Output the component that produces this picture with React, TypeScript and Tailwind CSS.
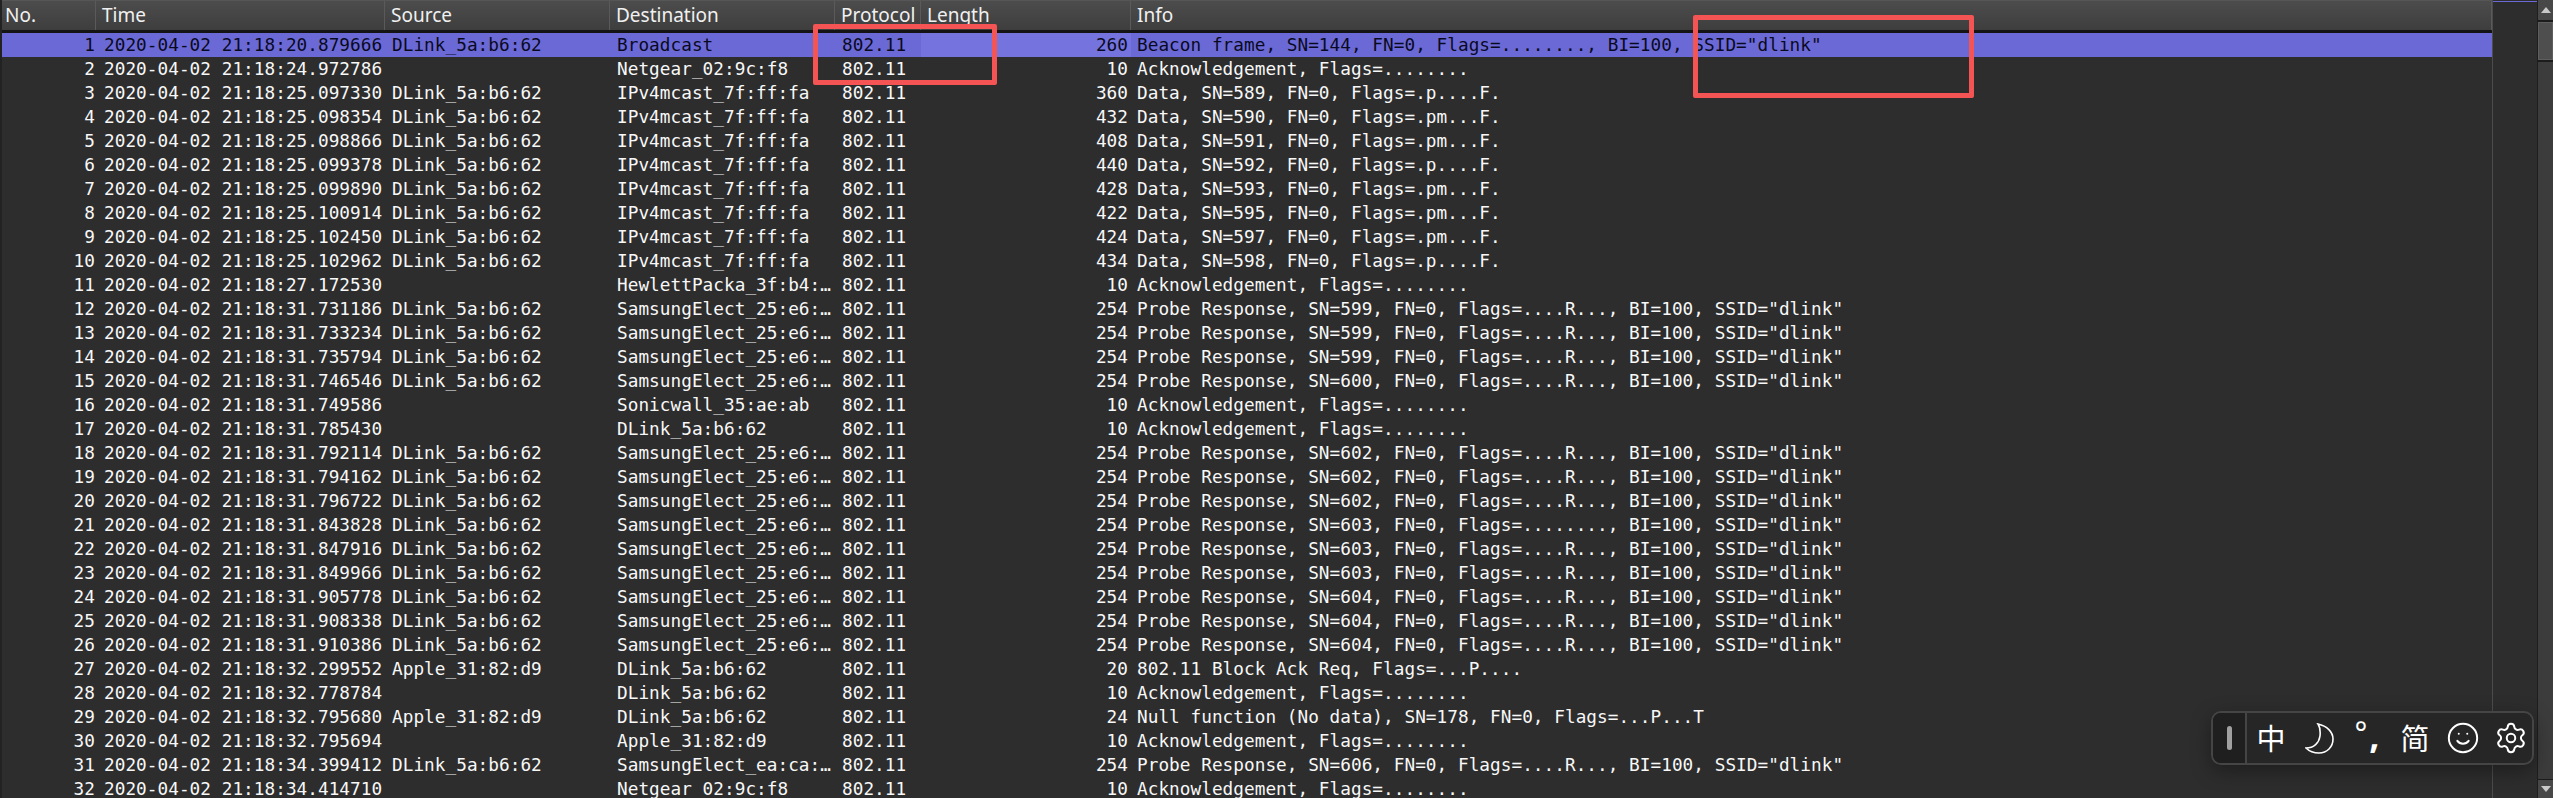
import React from 'react';
import { Settings, Smile } from 'lucide-react';

const APPLE = 'Apple_31:82:d9';
const DLINK = 'DLink_5a:b6:62';
const V4 = 'IPv4mcast_7f:ff:fa';
const SAM = 'SamsungElect_25:e6:…';
const ACK = 'Acknowledgement, Flags=........';

const data = (sn: number, flags: string) => `Data, SN=${sn}, FN=0, Flags=${flags}`;
const probe = (sn: number, flags = '....R...') => `Probe Response, SN=${sn}, FN=0, Flags=${flags}, BI=100, SSID="dlink"`;

// time, source, destination, length, info
const packets: [string, string, string, number, string][] = [
  ['20.879666', DLINK, 'Broadcast', 260, 'Beacon frame, SN=144, FN=0, Flags=........, BI=100, SSID="dlink"'],
  ['24.972786', '', 'Netgear_02:9c:f8', 10, ACK],
  ['25.097330', DLINK, V4, 360, data(589, '.p....F.')],
  ['25.098354', DLINK, V4, 432, data(590, '.pm...F.')],
  ['25.098866', DLINK, V4, 408, data(591, '.pm...F.')],
  ['25.099378', DLINK, V4, 440, data(592, '.p....F.')],
  ['25.099890', DLINK, V4, 428, data(593, '.pm...F.')],
  ['25.100914', DLINK, V4, 422, data(595, '.pm...F.')],
  ['25.102450', DLINK, V4, 424, data(597, '.pm...F.')],
  ['25.102962', DLINK, V4, 434, data(598, '.p....F.')],
  ['27.172530', '', 'HewlettPacka_3f:b4:…', 10, ACK],
  ['31.731186', DLINK, SAM, 254, probe(599)],
  ['31.733234', DLINK, SAM, 254, probe(599)],
  ['31.735794', DLINK, SAM, 254, probe(599)],
  ['31.746546', DLINK, SAM, 254, probe(600)],
  ['31.749586', '', 'Sonicwall_35:ae:ab', 10, ACK],
  ['31.785430', '', DLINK, 10, ACK],
  ['31.792114', DLINK, SAM, 254, probe(602)],
  ['31.794162', DLINK, SAM, 254, probe(602)],
  ['31.796722', DLINK, SAM, 254, probe(602)],
  ['31.843828', DLINK, SAM, 254, probe(603, '........')],
  ['31.847916', DLINK, SAM, 254, probe(603)],
  ['31.849966', DLINK, SAM, 254, probe(603)],
  ['31.905778', DLINK, SAM, 254, probe(604)],
  ['31.908338', DLINK, SAM, 254, probe(604)],
  ['31.910386', DLINK, SAM, 254, probe(604)],
  ['32.299552', APPLE, DLINK, 20, '802.11 Block Ack Req, Flags=...P....'],
  ['32.778784', '', DLINK, 10, ACK],
  ['32.795680', APPLE, DLINK, 24, 'Null function (No data), SN=178, FN=0, Flags=...P...T'],
  ['32.795694', '', APPLE, 10, ACK],
  ['34.399412', DLINK, 'SamsungElect_ea:ca:…', 254, probe(606)],
  ['34.414710', '', 'Netgear_02:9c:f8', 10, ACK],
];

const headers = ['No.', 'Time', 'Source', 'Destination', 'Protocol', 'Length', 'Info'];

const App: React.FC = () => {
  return (
    <div className="relative flex h-[798px] w-full overflow-hidden bg-[#2d2d2d]">
      {/* Packet list */}
      <div className="flex h-full w-[2492px] flex-none flex-col border-l-2 border-[#222222]">
        <div className="grid h-[33px] flex-none grid-cols-[94px_289px_225px_225px_86px_210px_1fr] border-t border-t-[#565656] border-b-[3px] border-b-[#141414] bg-linear-to-b from-[#4c4c4c] to-[#3e3e3e] font-['Noto_Sans',sans-serif] text-[19px] leading-[29px] text-[#f0f0f0]">
          {headers.map((h, i) => (
            <div key={h} className={`overflow-hidden border-r border-[#5a5a5a] whitespace-nowrap ${i === 0 ? 'pl-[3px]' : 'pl-[6px]'}`}>
              {h}
            </div>
          ))}
        </div>
        <div className="font-['DejaVu_Sans_Mono',monospace] text-[17.72px] leading-6 tracking-[0.04px] text-[#f8f8f8]">
          {packets.map((p, i) => (
            <div
              key={i}
              className={`grid h-6 grid-cols-[94px_289px_225px_225px_86px_210px_1fr] whitespace-pre ${i === 0 ? 'bg-[#6b69d6] text-[#0a0a1e]' : ''}`}
            >
              <div className="pr-px text-right">{i + 1}</div>
              <div className="pl-2">2020-04-02 21:18:{p[0]}</div>
              <div className="pl-[7px]">{p[1]}</div>
              <div className="pl-[7px]">{p[2]}</div>
              <div className="pl-[7px]">802.11</div>
              <div className={`pr-[3px] text-right ${i === 0 ? 'bg-[#7573dd]' : ''}`}>{p[3]}</div>
              <div className="pl-[6px]">{p[4]}</div>
            </div>
          ))}
        </div>
      </div>

      {/* Packet map strip */}
      <div className="h-full w-[46px] flex-none border-l border-r border-l-[#4c4c4c] border-r-[#1e1e1e] bg-[#2d2d2d] pt-px">
        <div className="h-px bg-[#6b69d6]" />
      </div>

      {/* Scrollbar */}
      <div className="flex h-full min-w-0 flex-1 flex-col bg-[#3c3c3c]">
        <div className="flex h-5 flex-none items-center justify-center bg-[#484848]">
          <svg width="10" height="6" viewBox="0 0 10 6"><path d="M5 0L10 6H0Z" fill="#c8c8c8" /></svg>
        </div>
        <div className="h-[2px] flex-none bg-[#1c1c1c]" />
        <div className="h-[38px] flex-none border border-[#5e5e5e] bg-[#4e4e4e]" />
        <div className="h-[2px] flex-none bg-[#1c1c1c]" />
        <div className="flex-1" />
        <div className="h-px flex-none bg-[#1c1c1c]" />
        <div className="flex h-[18px] flex-none items-center justify-center bg-[#484848]">
          <svg width="10" height="6" viewBox="0 0 10 6"><path d="M0 0H10L5 6Z" fill="#c8c8c8" /></svg>
        </div>
      </div>

      {/* Red annotation boxes */}
      <div className="absolute left-[813px] top-[24px] h-[61px] w-[184px] rounded-[2px] border-[5px] border-[#f45454]" />
      <div className="absolute left-[1693px] top-[15px] h-[83px] w-[281px] rounded-[2px] border-[5px] border-[#f45454]" />

      {/* Input method toolbar */}
      <div className="absolute left-[2211px] top-[711px] flex h-[54px] w-[323px] items-center rounded-[10px] border-2 border-[#454545] bg-[#262626] text-white shadow-[0_6px_20px_rgba(0,0,0,0.35)]">
        <div className="flex h-full w-[34px] flex-none items-center justify-center rounded-l-[8px] border-r-2 border-[#454545] bg-[#1f1f1f]">
          <div className="h-6 w-[5px] rounded-full bg-[#a0a0a0]" />
        </div>
        <div className="flex h-full w-12 flex-none items-center justify-center font-['Noto_Sans_CJK_SC',sans-serif] text-[29px]">中</div>
        <div className="flex h-full w-12 flex-none items-center justify-center">
          <svg width="29" height="31" viewBox="0 0 29 31" fill="none" stroke="white" strokeWidth="1.6">
            <path d="M13 1C22 3 28 9 28 16C28 24 22 30 14 30C9 30 4 28 1 25C9 25 14 20 15 13C15.5 8 15 4 13 1Z" />
          </svg>
        </div>
        <div className="flex h-full w-12 flex-none items-center justify-center">
          <span className="relative -top-[5px] font-['Noto_Sans',sans-serif] text-[30px] leading-none">°</span>
          <span className="relative -top-[3px] ml-[2px] font-['Noto_Sans',sans-serif] text-[36px] font-bold leading-none">,</span>
        </div>
        <div className="flex h-full w-12 flex-none items-center justify-center font-['Noto_Sans_CJK_SC',sans-serif] text-[29px]">简</div>
        <div className="flex h-full w-12 flex-none items-center justify-center">
          <Smile size={34} strokeWidth={1.4} />
        </div>
        <div className="flex h-full w-12 flex-none items-center justify-center">
          <Settings size={34} strokeWidth={1.4} />
        </div>
      </div>
    </div>
  );
};

export default App;
